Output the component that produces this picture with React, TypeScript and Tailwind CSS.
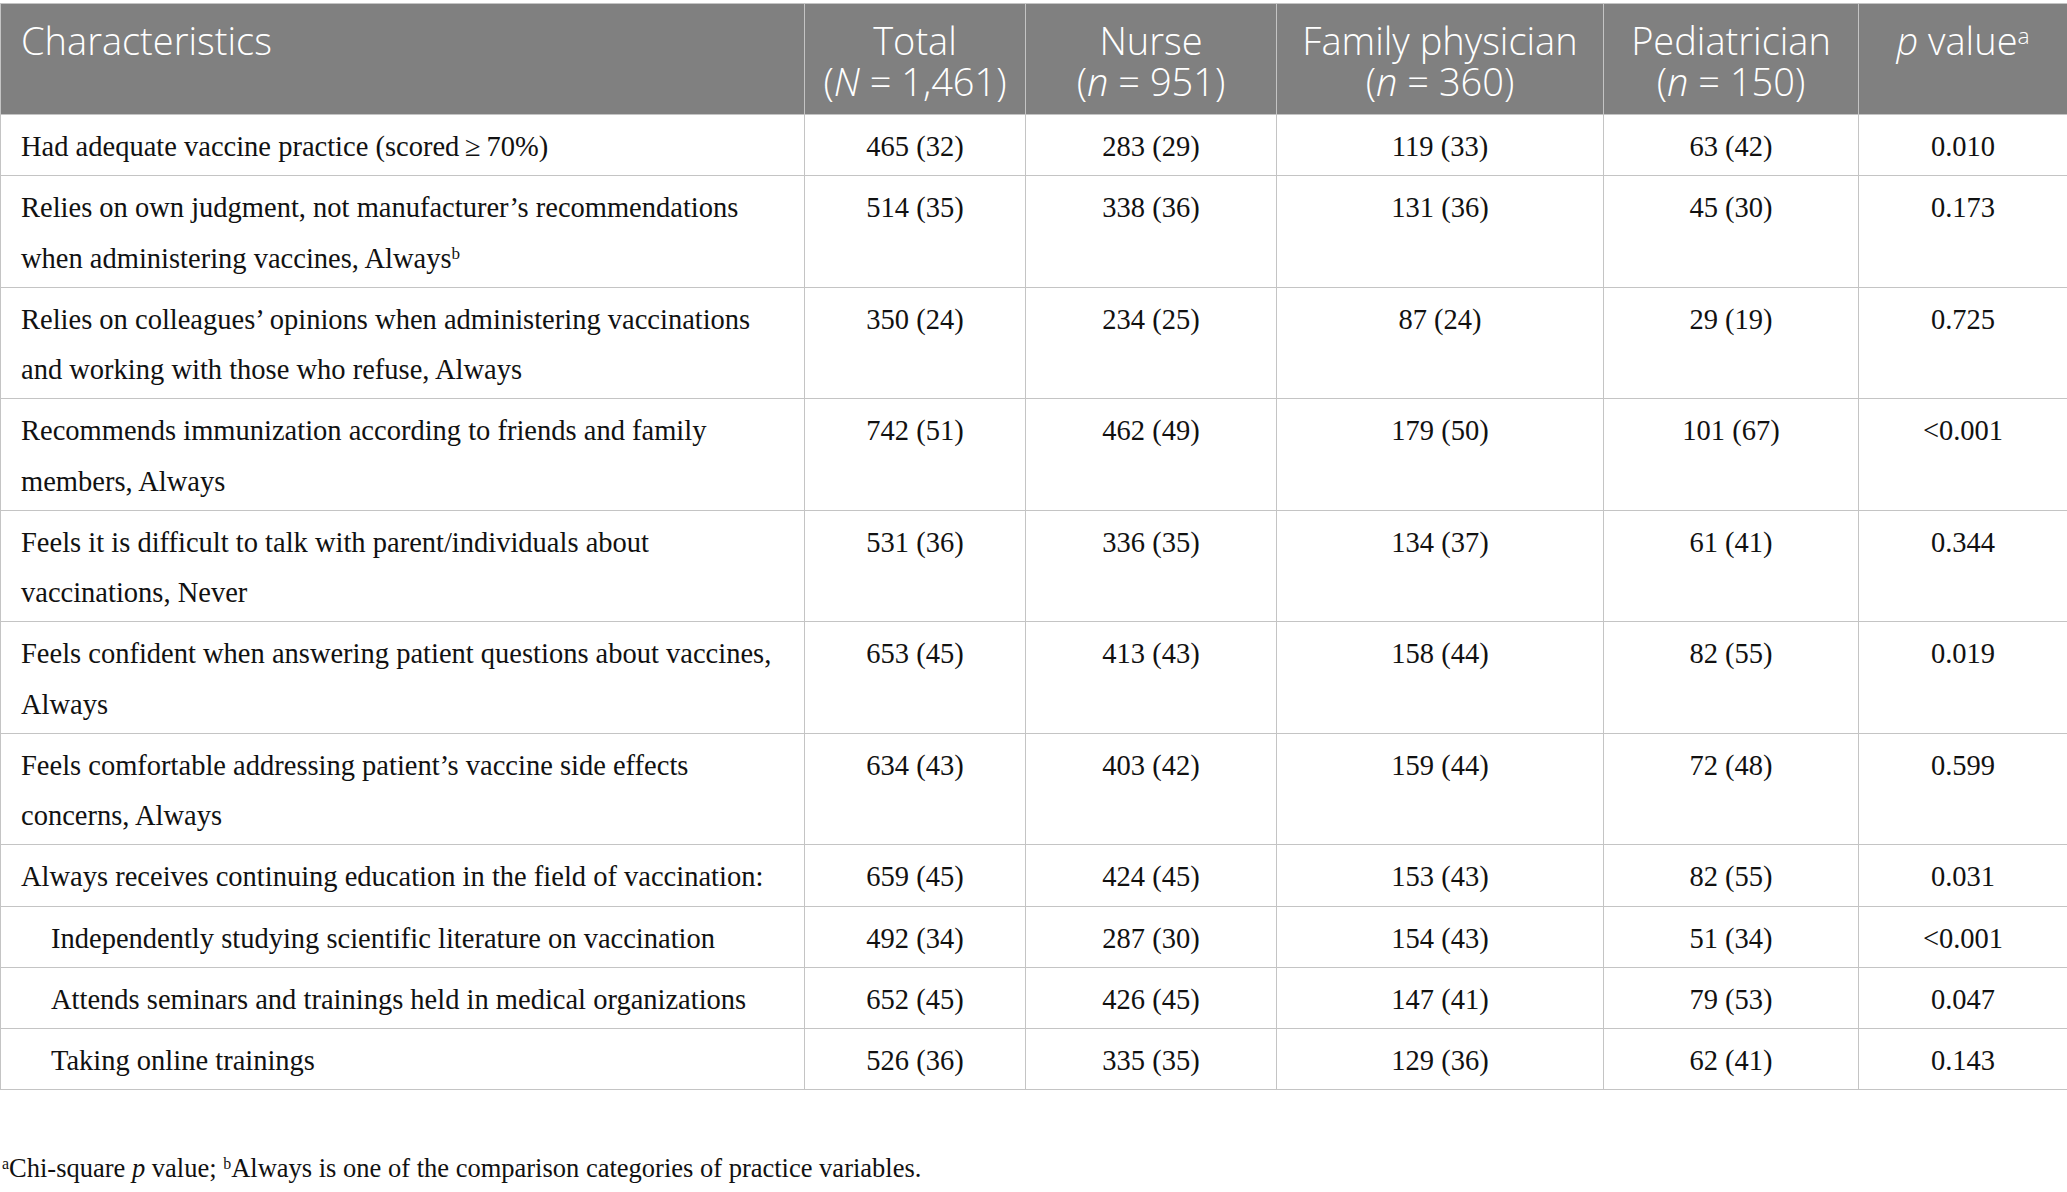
import React from "react";

type Row = { label: React.ReactNode; vals: string[]; indent?: boolean };

const Sup = ({ c }: { c: string }) => <sup className="text-[0.6em] leading-none">{c}</sup>;

const rows: Row[] = [
  { label: <>Had adequate vaccine practice (scored{"\u2009"}≥{"\u2009"}70%)</>, vals: ["465 (32)", "283 (29)", "119 (33)", "63 (42)", "0.010"] },
  { label: <>Relies on own judgment, not manufacturer’s recommendations<br />when administering vaccines, Always<Sup c="b" /></>, vals: ["514 (35)", "338 (36)", "131 (36)", "45 (30)", "0.173"] },
  { label: <>Relies on colleagues’ opinions when administering vaccinations<br />and working with those who refuse, Always</>, vals: ["350 (24)", "234 (25)", "87 (24)", "29 (19)", "0.725"] },
  { label: <>Recommends immunization according to friends and family<br />members, Always</>, vals: ["742 (51)", "462 (49)", "179 (50)", "101 (67)", "<0.001"] },
  { label: <>Feels it is difficult to talk with parent/individuals about<br />vaccinations, Never</>, vals: ["531 (36)", "336 (35)", "134 (37)", "61 (41)", "0.344"] },
  { label: <>Feels confident when answering patient questions about vaccines,<br />Always</>, vals: ["653 (45)", "413 (43)", "158 (44)", "82 (55)", "0.019"] },
  { label: <>Feels comfortable addressing patient’s vaccine side effects<br />concerns, Always</>, vals: ["634 (43)", "403 (42)", "159 (44)", "72 (48)", "0.599"] },
  { label: <>Always receives continuing education in the field of vaccination:</>, vals: ["659 (45)", "424 (45)", "153 (43)", "82 (55)", "0.031"] },
  { label: <>Independently studying scientific literature on vaccination</>, vals: ["492 (34)", "287 (30)", "154 (43)", "51 (34)", "<0.001"], indent: true },
  { label: <>Attends seminars and trainings held in medical organizations</>, vals: ["652 (45)", "426 (45)", "147 (41)", "79 (53)", "0.047"], indent: true },
  { label: <>Taking online trainings</>, vals: ["526 (36)", "335 (35)", "129 (36)", "62 (41)", "0.143"], indent: true },
];

const serif = "font-['Liberation_Serif',serif]";
const sans = "font-['Open_Sans',sans-serif]";
const th = "border border-[#c4c4c4] border-b-0 font-light pt-[16px] pb-[12px]";

export default function App() {
  return (
    <div className="w-[2067px] h-[1192px] bg-white overflow-hidden">
      <table className="mt-[3px] w-[2067px] table-fixed border-collapse">
        <colgroup>
          <col className="w-[804px]" />
          <col className="w-[221px]" />
          <col className="w-[251px]" />
          <col className="w-[327px]" />
          <col className="w-[255px]" />
          <col className="w-[209px]" />
        </colgroup>
        <thead>
          <tr className={`bg-[#808080] text-white ${sans} font-light text-[38px] leading-[41px] align-top`}>
            <th className={`${th} text-left pl-[20px]`}>Characteristics</th>
            <th className={`${th} text-center`}>Total<br />(<i>N</i> = 1,461)</th>
            <th className={`${th} text-center`}>Nurse<br />(<i>n</i> = 951)</th>
            <th className={`${th} text-center`}>Family physician<br />(<i>n</i> = 360)</th>
            <th className={`${th} text-center`}>Pediatrician<br />(<i>n</i> = 150)</th>
            <th className={`${th} text-center`}><i>p</i> value<Sup c="a" /></th>
          </tr>
        </thead>
        <tbody className={`${serif} text-[28.5px] leading-[50.25px] text-[#111]`}>
          {rows.map((r, i) => (
            <tr key={i} className="align-top">
              <td className={`border border-[#c4c4c4] pt-[7px] pb-[3px] pr-0 whitespace-nowrap ${r.indent ? "pl-[50px]" : "pl-[20px]"}`}>{r.label}</td>
              {r.vals.map((v, j) => (
                <td key={j} className="border border-[#c4c4c4] pt-[7px] pb-[3px] text-center">{v}</td>
              ))}
            </tr>
          ))}
        </tbody>
      </table>
      <div className={`${serif} text-[26.5px] leading-[30px] text-[#111] mt-[63px] pl-[2px]`}>
        <Sup c="a" />Chi-square <i>p</i> value; <Sup c="b" />Always is one of the comparison categories of practice variables.
      </div>
    </div>
  );
}
